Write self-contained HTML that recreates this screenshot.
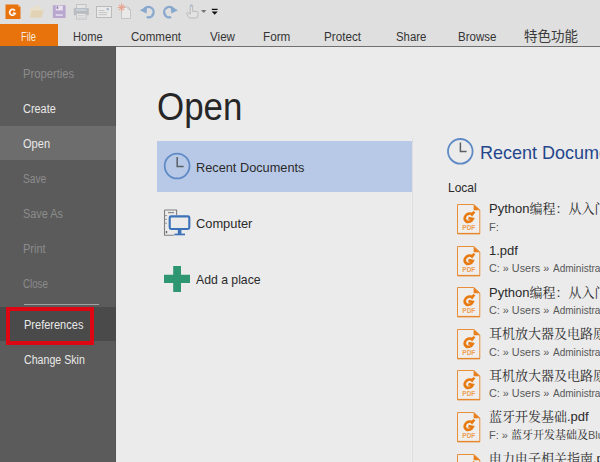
<!DOCTYPE html>
<html><head><meta charset="utf-8">
<style>
*{margin:0;padding:0;box-sizing:border-box}
html,body{width:600px;height:462px;overflow:hidden;background:#ebebeb;font-family:"Liberation Sans","Noto Sans CJK SC",sans-serif;}
.a{position:absolute}
.t{position:absolute;white-space:nowrap;transform-origin:0 0;line-height:1.2}
#top{left:0;top:0;width:600px;height:47px;background:#dfdfdf}
#tabline{left:58px;top:46px;width:542px;height:1px;background:#707070}
#file{left:0;top:24px;width:58px;height:22px;background:#e8720b}
#side{left:0;top:46px;width:116px;height:416px;background:#5b5b5b;border-right:1px solid #545454}
#main{left:116px;top:47px;width:484px;height:415px;background:#ebebeb}
</style></head><body>
<div id="top" class="a"></div>
<div id="file" class="a"></div>
<div id="tabline" class="a"></div>
<div id="side" class="a"></div>
<div class="a" style="left:0;top:126px;width:116px;height:34px;background:#6d6d6d"></div>
<div class="a" style="left:0;top:307px;width:116px;height:34px;background:#4a4a4a"></div>
<div class="a" style="left:24px;top:304px;width:75px;height:1px;background:#a2a2a2"></div>
<div class="a" style="left:6px;top:307px;width:88px;height:38px;border:4px solid #dd0713"></div>
<div class="a" style="left:411px;top:138px;width:1px;height:324px;background:#f0f0f0"></div>
<div class="a" style="left:412px;top:138px;width:1px;height:324px;background:#dedede"></div>
<div class="a" style="left:157px;top:141px;width:255px;height:51px;background:#b8c9e7"></div>
<svg class="a" style="left:0;top:0" width="240" height="24" viewBox="0 0 240 24">
<!-- logo -->
<path d="M5.5 4.5H18.2L20.5 6.8V19H5.5Z" fill="#e8730c"/>
<path d="M18.2 4.5L20.5 6.8H18.2Z" fill="#f3b77c"/>
<path d="M14.9 10.6A2.9 2.9 0 1 0 15.2 13.5L12.9 12.9" fill="none" stroke="#fdf3ea" stroke-width="1.8"/>
<!-- folder -->
<path d="M30 7.6H33.5L34.5 5.8H40.6V9H43.6L41.5 17.6H30Z" fill="#e8dfcc"/>
<path d="M31.5 10.5H43.6L41.5 17.6H30Z" fill="#e2d3b4"/>
<!-- floppy -->
<rect x="52.8" y="5.2" width="12.8" height="12.8" fill="#b9a7d0"/>
<rect x="55.8" y="5.8" width="7" height="4.6" fill="#e9e3f0"/>
<rect x="56.6" y="6.4" width="1.6" height="2.4" fill="#8d7aa6"/>
<rect x="55.8" y="14.4" width="7" height="1.3" fill="#ece7f2"/>
<g opacity="0.78"><!-- printer -->
<rect x="76.5" y="4.5" width="9.5" height="4" fill="#e6e6e6" stroke="#b9bcc0" stroke-width="1"/>
<rect x="73.8" y="8.2" width="15" height="7" fill="#aeb2b8"/>
<rect x="76" y="9.2" width="10.5" height="1.6" fill="#c5d3e0"/>
<rect x="76.5" y="13.5" width="9.5" height="5.6" fill="#e9e9e9" stroke="#b9bcc0" stroke-width="1"/>
<path d="M78 15.5H84.5M78 17.3H84.5" stroke="#c2c4c8" stroke-width="0.8"/>
<!-- envelope/card -->
<rect x="96.5" y="6.5" width="15" height="11" fill="#ececec" stroke="#b2b2b2" stroke-width="1"/>
<path d="M98.5 10.5H104.5M98.5 12.6H107M98.5 14.7H107" stroke="#b9b9b9" stroke-width="0.9"/>
<rect x="106.6" y="8.2" width="2.2" height="2" fill="#8fa3c6"/>
<!-- new doc star -->
<path d="M121.5 7H128L130.5 9.5V18.5H121.5Z" fill="#ececec" stroke="#bdbdbd" stroke-width="1"/>
<path d="M128 7V9.5H130.5" fill="none" stroke="#bdbdbd" stroke-width="0.8"/>
<path d="M121.6 3.6V11.4M117.8 7.5H125.4M119 4.8L124.2 10.2M124.2 4.8L119 10.2" stroke="#ea957c" stroke-width="1.1"/>
</g><!-- undo -->
<path d="M143.6 10.2A5.2 5.2 0 1 1 146.6 17" fill="none" stroke="#88a8ce" stroke-width="2.3"/>
<path d="M139.8 10.2L147 6.6L146.6 13.4Z" fill="#88a8ce"/>
<!-- redo -->
<path d="M174.2 10.2A5.2 5.2 0 1 0 171.2 17" fill="none" stroke="#88a8ce" stroke-width="2.3"/>
<path d="M178 10.2L170.8 6.6L171.2 13.4Z" fill="#88a8ce"/>
<!-- hand -->
<path d="M190.2 6.2A1.2 1.2 0 0 1 192.6 6.2V11.4H196.2A1.8 1.8 0 0 1 198 13.2V15.4A2.6 2.6 0 0 1 195.4 18H190.4A2.4 2.4 0 0 1 188.2 16.4L186.4 13.4L187.6 12.4L190.2 14.2Z" fill="#e2e2e2" stroke="#b9b9b9" stroke-width="1"/>
<circle cx="191.4" cy="5.6" r="1.2" fill="#a9b9d3"/>
<!-- small arrow -->
<path d="M201 10H206.4L203.7 12.9Z" fill="#777"/>
<!-- customize -->
<path d="M211.8 9.4H217.6" stroke="#111" stroke-width="1.3"/>
<path d="M211.6 11.6H217.8L214.7 14.8Z" fill="#111"/>
</svg>
<!-- clock left -->
<svg class="a" style="left:162px;top:151px" width="30" height="30" viewBox="0 0 30 30">
<circle cx="15.1" cy="15" r="12.4" fill="none" stroke="#5f8ac6" stroke-width="1.8"/>
<path d="M15.2 6V15.4H21.6" fill="none" stroke="#5a5f66" stroke-width="1.5"/>
</svg>
<!-- clock right -->
<svg class="a" style="left:445px;top:136px" width="30" height="30" viewBox="0 0 30 30">
<circle cx="15.3" cy="15.3" r="12.3" fill="none" stroke="#5f8ac6" stroke-width="1.8"/>
<path d="M15.4 6.4V15.6H21.6" fill="none" stroke="#5a5f66" stroke-width="1.5"/>
</svg>
<!-- computer -->
<svg class="a" style="left:162px;top:207px" width="32" height="32" viewBox="0 0 32 32">
<path d="M2.5 3H14.6V8M2.5 3V28.2H12" fill="none" stroke="#808080" stroke-width="1.1"/>
<path d="M6 5.6H12" stroke="#8a8a8a" stroke-width="1.2"/>
<path d="M2.5 8.6H5M2.5 12.4H5M2.5 16.2H5" stroke="#8a8a8a" stroke-width="0.9"/>
<rect x="3.8" y="24" width="1.4" height="2.2" fill="#666"/>
<rect x="7.7" y="9.4" width="19.6" height="12.6" rx="1.4" fill="#ebebeb" stroke="#3c72b8" stroke-width="2.1"/>
<rect x="15.8" y="23" width="3.6" height="4" fill="#3c72b8"/>
<rect x="12.4" y="26.6" width="10.6" height="1.7" fill="#3c72b8"/>
</svg>
<!-- plus -->
<svg class="a" style="left:163px;top:265px" width="28" height="28" viewBox="0 0 28 28">
<path d="M10.2 1H18V9.8H27V18H18V27H10.2V18H1V9.8H10.2Z" fill="#2f9672"/>
</svg>
<svg class="a" style="left:456.5px;top:203.8px" width="24" height="31" viewBox="0 0 24 31">
<path d="M0.5 0.5H16.8L22.8 6V29.6H0.5Z" fill="#efeeed" stroke="#e98f3a" stroke-width="1"/>
<path d="M0.5 29.6H22.8" stroke="#e8862c" stroke-width="1.4"/>
<path d="M16.6 0.3L23 6.2H16.6Z" fill="#e8801f"/>
<g transform="translate(11.7,13.5) skewX(-10)"><path d="M4.6 -5.9L2.9 -3.1A4.2 4.2 0 1 0 4.3 1.5L-0.2 0.7" fill="none" stroke="#e87a12" stroke-width="2.7" stroke-linejoin="miter"/></g>
<text x="11.8" y="25.8" font-family="Liberation Sans, sans-serif" font-weight="bold" font-size="6.5" fill="#ee9d52" text-anchor="middle">PDF</text>
</svg>
<svg class="a" style="left:456.5px;top:245.6px" width="24" height="31" viewBox="0 0 24 31">
<path d="M0.5 0.5H16.8L22.8 6V29.6H0.5Z" fill="#efeeed" stroke="#e98f3a" stroke-width="1"/>
<path d="M0.5 29.6H22.8" stroke="#e8862c" stroke-width="1.4"/>
<path d="M16.6 0.3L23 6.2H16.6Z" fill="#e8801f"/>
<g transform="translate(11.7,13.5) skewX(-10)"><path d="M4.6 -5.9L2.9 -3.1A4.2 4.2 0 1 0 4.3 1.5L-0.2 0.7" fill="none" stroke="#e87a12" stroke-width="2.7" stroke-linejoin="miter"/></g>
<text x="11.8" y="25.8" font-family="Liberation Sans, sans-serif" font-weight="bold" font-size="6.5" fill="#ee9d52" text-anchor="middle">PDF</text>
</svg>
<svg class="a" style="left:456.5px;top:287.4px" width="24" height="31" viewBox="0 0 24 31">
<path d="M0.5 0.5H16.8L22.8 6V29.6H0.5Z" fill="#efeeed" stroke="#e98f3a" stroke-width="1"/>
<path d="M0.5 29.6H22.8" stroke="#e8862c" stroke-width="1.4"/>
<path d="M16.6 0.3L23 6.2H16.6Z" fill="#e8801f"/>
<g transform="translate(11.7,13.5) skewX(-10)"><path d="M4.6 -5.9L2.9 -3.1A4.2 4.2 0 1 0 4.3 1.5L-0.2 0.7" fill="none" stroke="#e87a12" stroke-width="2.7" stroke-linejoin="miter"/></g>
<text x="11.8" y="25.8" font-family="Liberation Sans, sans-serif" font-weight="bold" font-size="6.5" fill="#ee9d52" text-anchor="middle">PDF</text>
</svg>
<svg class="a" style="left:456.5px;top:329.0px" width="24" height="31" viewBox="0 0 24 31">
<path d="M0.5 0.5H16.8L22.8 6V29.6H0.5Z" fill="#efeeed" stroke="#e98f3a" stroke-width="1"/>
<path d="M0.5 29.6H22.8" stroke="#e8862c" stroke-width="1.4"/>
<path d="M16.6 0.3L23 6.2H16.6Z" fill="#e8801f"/>
<g transform="translate(11.7,13.5) skewX(-10)"><path d="M4.6 -5.9L2.9 -3.1A4.2 4.2 0 1 0 4.3 1.5L-0.2 0.7" fill="none" stroke="#e87a12" stroke-width="2.7" stroke-linejoin="miter"/></g>
<text x="11.8" y="25.8" font-family="Liberation Sans, sans-serif" font-weight="bold" font-size="6.5" fill="#ee9d52" text-anchor="middle">PDF</text>
</svg>
<svg class="a" style="left:456.5px;top:370.4px" width="24" height="31" viewBox="0 0 24 31">
<path d="M0.5 0.5H16.8L22.8 6V29.6H0.5Z" fill="#efeeed" stroke="#e98f3a" stroke-width="1"/>
<path d="M0.5 29.6H22.8" stroke="#e8862c" stroke-width="1.4"/>
<path d="M16.6 0.3L23 6.2H16.6Z" fill="#e8801f"/>
<g transform="translate(11.7,13.5) skewX(-10)"><path d="M4.6 -5.9L2.9 -3.1A4.2 4.2 0 1 0 4.3 1.5L-0.2 0.7" fill="none" stroke="#e87a12" stroke-width="2.7" stroke-linejoin="miter"/></g>
<text x="11.8" y="25.8" font-family="Liberation Sans, sans-serif" font-weight="bold" font-size="6.5" fill="#ee9d52" text-anchor="middle">PDF</text>
</svg>
<svg class="a" style="left:456.5px;top:412.0px" width="24" height="31" viewBox="0 0 24 31">
<path d="M0.5 0.5H16.8L22.8 6V29.6H0.5Z" fill="#efeeed" stroke="#e98f3a" stroke-width="1"/>
<path d="M0.5 29.6H22.8" stroke="#e8862c" stroke-width="1.4"/>
<path d="M16.6 0.3L23 6.2H16.6Z" fill="#e8801f"/>
<g transform="translate(11.7,13.5) skewX(-10)"><path d="M4.6 -5.9L2.9 -3.1A4.2 4.2 0 1 0 4.3 1.5L-0.2 0.7" fill="none" stroke="#e87a12" stroke-width="2.7" stroke-linejoin="miter"/></g>
<text x="11.8" y="25.8" font-family="Liberation Sans, sans-serif" font-weight="bold" font-size="6.5" fill="#ee9d52" text-anchor="middle">PDF</text>
</svg>
<svg class="a" style="left:456.5px;top:453.5px" width="24" height="31" viewBox="0 0 24 31">
<path d="M0.5 0.5H16.8L22.8 6V29.6H0.5Z" fill="#efeeed" stroke="#e98f3a" stroke-width="1"/>
<path d="M0.5 29.6H22.8" stroke="#e8862c" stroke-width="1.4"/>
<path d="M16.6 0.3L23 6.2H16.6Z" fill="#e8801f"/>
<g transform="translate(11.7,13.5) skewX(-10)"><path d="M4.6 -5.9L2.9 -3.1A4.2 4.2 0 1 0 4.3 1.5L-0.2 0.7" fill="none" stroke="#e87a12" stroke-width="2.7" stroke-linejoin="miter"/></g>
<text x="11.8" y="25.8" font-family="Liberation Sans, sans-serif" font-weight="bold" font-size="6.5" fill="#ee9d52" text-anchor="middle">PDF</text>
</svg>
<div class="t" id="t0" style="left:21.3px;top:29.50px;font-size:12px;color:#f6eadc;transform:scaleX(0.7754);">File</div>
<div class="t" id="t1" style="left:72.7px;top:29.50px;font-size:12px;color:#343434;transform:scaleX(0.9245);">Home</div>
<div class="t" id="t2" style="left:130.7px;top:29.50px;font-size:12px;color:#343434;transform:scaleX(0.9612);">Comment</div>
<div class="t" id="t3" style="left:210.0px;top:29.50px;font-size:12px;color:#343434;transform:scaleX(0.9691);">View</div>
<div class="t" id="t4" style="left:263.3px;top:29.50px;font-size:12px;color:#343434;transform:scaleX(0.9786);">Form</div>
<div class="t" id="t5" style="left:324.0px;top:29.50px;font-size:12px;color:#343434;transform:scaleX(0.9733);">Protect</div>
<div class="t" id="t6" style="left:395.7px;top:29.50px;font-size:12px;color:#343434;transform:scaleX(0.9460);">Share</div>
<div class="t" id="t7" style="left:458.0px;top:29.50px;font-size:12px;color:#343434;transform:scaleX(0.9621);">Browse</div>
<div class="t" id="t8" style="left:524.0px;top:28.60px;font-size:13.5px;color:#3a3a3a;">特色功能</div>
<div class="t" id="t9" style="left:22.8px;top:66.60px;font-size:12px;color:#8c8c8c;transform:scaleX(0.9360);">Properties</div>
<div class="t" id="t10" style="left:23.4px;top:101.90px;font-size:12px;color:#e9e9e9;transform:scaleX(0.9103);">Create</div>
<div class="t" id="t11" style="left:23.4px;top:136.90px;font-size:12px;color:#e9e9e9;transform:scaleX(0.9230);">Open</div>
<div class="t" id="t12" style="left:23.4px;top:171.90px;font-size:12px;color:#8c8c8c;transform:scaleX(0.8516);">Save</div>
<div class="t" id="t13" style="left:23.4px;top:206.90px;font-size:12px;color:#8c8c8c;transform:scaleX(0.9062);">Save As</div>
<div class="t" id="t14" style="left:23.4px;top:242.00px;font-size:12px;color:#8c8c8c;transform:scaleX(0.9154);">Print</div>
<div class="t" id="t15" style="left:23.4px;top:276.90px;font-size:12px;color:#8c8c8c;transform:scaleX(0.8114);">Close</div>
<div class="t" id="t16" style="left:23.6px;top:317.60px;font-size:12px;color:#e9e9e9;transform:scaleX(0.9180);">Preferences</div>
<div class="t" id="t17" style="left:23.6px;top:353.00px;font-size:12px;color:#e9e9e9;transform:scaleX(0.8848);">Change Skin</div>
<div class="t" id="t18" style="left:157.0px;top:84.30px;font-size:38.5px;color:#262626;transform:scaleX(0.9067);">Open</div>
<div class="t" id="t19" style="left:196.0px;top:159.60px;font-size:13px;color:#2a2a2a;transform:scaleX(0.9804);">Recent Documents</div>
<div class="t" id="t20" style="left:196.0px;top:216.00px;font-size:13px;color:#2a2a2a;transform:scaleX(0.9881);">Computer</div>
<div class="t" id="t21" style="left:195.8px;top:272.40px;font-size:13px;color:#2a2a2a;transform:scaleX(0.9407);">Add a place</div>
<div class="t" id="t22" style="left:479.6px;top:141.60px;font-size:19px;color:#24468c;transform:scaleX(0.9469);">Recent Documents</div>
<div class="t" id="t23" style="left:448.0px;top:180.20px;font-size:13px;color:#2a2a2a;transform:scaleX(0.9235);">Local</div>
<div class="t" id="t24" style="left:489.0px;top:201.00px;font-size:13px;color:#2a2a2a;font-family:'Liberation Sans','Noto Serif CJK SC',serif;">Python编程：从入门到实践.pdf</div>
<div class="t" id="t25" style="left:489.0px;top:220.60px;font-size:11px;color:#585858;font-family:'Liberation Sans','Noto Serif CJK SC',serif;">F:</div>
<div class="t" id="t26" style="left:489.0px;top:242.80px;font-size:13px;color:#2a2a2a;font-family:'Liberation Sans','Noto Serif CJK SC',serif;">1.pdf</div>
<div class="t" id="t27" style="left:489.0px;top:262.40px;font-size:11px;color:#585858;font-family:'Liberation Sans','Noto Serif CJK SC',serif;transform:scaleX(0.9846);">C: » Users »</div>
<div class="t" id="t28" style="left:553.4px;top:262.40px;font-size:11px;color:#585858;font-family:'Liberation Sans','Noto Serif CJK SC',serif;transform:scaleX(0.9118);">Administrator » Desktop</div>
<div class="t" id="t29" style="left:489.0px;top:284.60px;font-size:13px;color:#2a2a2a;font-family:'Liberation Sans','Noto Serif CJK SC',serif;">Python编程：从入门到实践.pdf</div>
<div class="t" id="t30" style="left:489.0px;top:304.20px;font-size:11px;color:#585858;font-family:'Liberation Sans','Noto Serif CJK SC',serif;transform:scaleX(0.9846);">C: » Users »</div>
<div class="t" id="t31" style="left:553.4px;top:304.20px;font-size:11px;color:#585858;font-family:'Liberation Sans','Noto Serif CJK SC',serif;transform:scaleX(0.9118);">Administrator » Desktop</div>
<div class="t" id="t32" style="left:489.0px;top:326.20px;font-size:13px;color:#2a2a2a;font-family:'Liberation Sans','Noto Serif CJK SC',serif;">耳机放大器及电路原理图.pdf</div>
<div class="t" id="t33" style="left:489.0px;top:345.80px;font-size:11px;color:#585858;font-family:'Liberation Sans','Noto Serif CJK SC',serif;transform:scaleX(0.9846);">C: » Users »</div>
<div class="t" id="t34" style="left:553.4px;top:345.80px;font-size:11px;color:#585858;font-family:'Liberation Sans','Noto Serif CJK SC',serif;transform:scaleX(0.9118);">Administrator » Desktop</div>
<div class="t" id="t35" style="left:489.0px;top:367.60px;font-size:13px;color:#2a2a2a;font-family:'Liberation Sans','Noto Serif CJK SC',serif;">耳机放大器及电路原理图.pdf</div>
<div class="t" id="t36" style="left:489.0px;top:387.20px;font-size:11px;color:#585858;font-family:'Liberation Sans','Noto Serif CJK SC',serif;transform:scaleX(0.9846);">C: » Users »</div>
<div class="t" id="t37" style="left:553.4px;top:387.20px;font-size:11px;color:#585858;font-family:'Liberation Sans','Noto Serif CJK SC',serif;transform:scaleX(0.9118);">Administrator » Desktop</div>
<div class="t" id="t38" style="left:489.0px;top:409.20px;font-size:13px;color:#2a2a2a;font-family:'Liberation Sans','Noto Serif CJK SC',serif;">蓝牙开发基础.pdf</div>
<div class="t" id="t39" style="left:489.0px;top:428.80px;font-size:11px;color:#585858;font-family:'Liberation Sans','Noto Serif CJK SC',serif;">F: » <span style="color:#1e1e1e">蓝牙开发基础及</span>Bluetooth</div>
<div class="t" id="t40" style="left:489.0px;top:450.70px;font-size:13px;color:#2a2a2a;font-family:'Liberation Sans','Noto Serif CJK SC',serif;">电力电子相关指南.pdf</div>
<div class="t" id="t41" style="left:489.0px;top:470.30px;font-size:11px;color:#585858;font-family:'Liberation Sans','Noto Serif CJK SC',serif;transform:scaleX(0.9846);">C: » Users »</div>
<div class="t" id="t42" style="left:553.4px;top:470.30px;font-size:11px;color:#585858;font-family:'Liberation Sans','Noto Serif CJK SC',serif;transform:scaleX(0.9118);">Administrator » Desktop</div>
</body></html>
